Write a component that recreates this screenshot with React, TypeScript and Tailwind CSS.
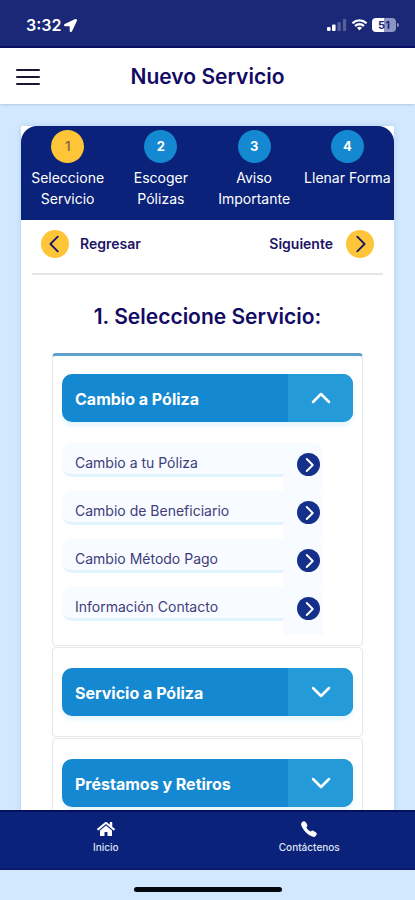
import React, { useState } from 'react';
import { FaHome, FaLocationArrow } from 'react-icons/fa';
import { IoCall } from 'react-icons/io5';

interface ServiceGroup {
  title: string;
  options: string[];
}

const steps = ['Seleccione Servicio', 'Escoger Pólizas', 'Aviso Importante', 'Llenar Forma'];

const groups: ServiceGroup[] = [
  {
    title: 'Cambio a Póliza',
    options: [
      'Cambio a tu Póliza',
      'Cambio de Beneficiario',
      'Cambio Método Pago',
      'Información Contacto',
    ],
  },
  { title: 'Servicio a Póliza', options: [] },
  { title: 'Préstamos y Retiros', options: [] },
];

interface ChevronProps {
  points: string;
  className: string;
}

function Chevron({ points, className }: ChevronProps) {
  return (
    <svg
      viewBox="0 0 24 24"
      fill="none"
      stroke="currentColor"
      strokeLinecap="round"
      strokeLinejoin="round"
      className={className}
      aria-hidden="true"
    >
      <polyline points={points} />
    </svg>
  );
}

const LEFT = '15,4 7,12 15,20';
const RIGHT = '9,4 17,12 9,20';
const UP = '4,16 12,8 20,16';
const DOWN = '4,8 12,16 20,8';

function StatusBar() {
  return (
    <div className="h-12 shrink-0 flex items-center justify-between pt-1 pl-[26px] pr-4 bg-[#1b2877] border-b-2 border-[#0c1169] text-white">
      <div className="flex items-center gap-[3px]">
        <span className="text-base font-semibold">3:32</span>
        <FaLocationArrow className="size-[13px]" />
      </div>
      <div className="flex items-center gap-1">
        <svg viewBox="0 0 20 12" className="w-5 h-3" fill="currentColor" aria-hidden="true">
          <rect x="0" y="8" width="3.6" height="4" rx="1" />
          <rect x="5" y="5.5" width="3.6" height="6.5" rx="1" />
          <rect x="10.4" y="3" width="3.4" height="9" rx="1" opacity=".25" />
          <rect x="15.8" y="0" width="3.4" height="12" rx="1" opacity=".25" />
        </svg>
        <svg viewBox="0 0 17 12" className="w-[17px] h-3" fill="currentColor" aria-hidden="true">
          <path d="M8.5 2.5c2.3 0 4.4.9 6 2.4.1.1.3.1.4 0l1.2-1.2c.1-.1.1-.3 0-.4a11 11 0 0 0-15.2 0c-.1.1-.1.3 0 .4l1.2 1.2c.1.1.3.1.4 0a8.7 8.7 0 0 1 6-2.4z" />
          <path d="M8.500 6.400c1.300 0 2.500.5 3.400 1.300.1.100.3.100.4 0l1.200-1.200c.1-.1.1-.3 0-.4a7.200 7.200 0 0 0-10 0c-.1.100-.1.300 0 .4l1.200 1.200c.1.100.3.100.4 0 .9-.8 2.100-1.300 3.400-1.300z" />
          <path d="M10.900 9.100c.1-.1.100-.300 0-.4a3.600 3.600 0 0 0-4.800 0c-.1.100-.1.300 0 .4l2.200 2.200c.1.100.3.100.4 0z" />
        </svg>
        <div className="flex items-center gap-px">
          <span className="w-6 h-3.5 flex items-center justify-center rounded-[4px] bg-linear-to-r from-white from-50% to-[#8f95c1] to-50% text-[#1b2877] text-[11px] leading-none font-bold">
            51
          </span>
          <span className="w-0.5 h-1 rounded-r-full bg-[#8f95c1]" />
        </div>
      </div>
    </div>
  );
}

function TopBar() {
  return (
    <header className="relative h-14 shrink-0 flex items-center justify-center bg-white pt-0.5 shadow-sm">
      <button
        type="button"
        aria-label="Menú"
        className="absolute left-4 flex flex-col gap-[5px] py-2"
      >
        <span className="w-6 h-0.5 rounded-full bg-[#15182f]" />
        <span className="w-6 h-0.5 rounded-full bg-[#15182f]" />
        <span className="w-6 h-0.5 rounded-full bg-[#15182f]" />
      </button>
      <h1 className="text-[21px] font-semibold text-[#120a63]">Nuevo Servicio</h1>
    </header>
  );
}

function Stepper() {
  return (
    <ol className="grid grid-cols-4 rounded-t-2xl bg-[#0a2279] pt-1 pb-[11px] text-white">
      {steps.map((step, index) => (
        <li key={step} className="flex flex-col items-center gap-1">
          <span
            className={
              index === 0
                ? 'size-[33px] flex items-center justify-center rounded-full bg-[#fec539] text-[13px] font-semibold text-[#8a6a4a]'
                : 'size-[33px] flex items-center justify-center rounded-full bg-[#1488d0] text-[13px] font-bold'
            }
          >
            {index + 1}
          </span>
          <span className="text-center text-sm leading-[21px]">{step}</span>
        </li>
      ))}
    </ol>
  );
}

function StepNav() {
  return (
    <div className="mx-[11px] flex justify-between border-b-2 border-[#e6e6e8] px-[9px] pt-2.5 pb-[15px] text-sm font-semibold text-[#1c1464]">
      <button type="button" className="flex items-center gap-[11px]">
        <span className="size-7 flex items-center justify-center rounded-full bg-[#fec539]">
          <Chevron points={LEFT} className="size-[22px] stroke-2" />
        </span>
        Regresar
      </button>
      <button type="button" className="flex items-center gap-[13px]">
        Siguiente
        <span className="size-7 flex items-center justify-center rounded-full bg-[#fec539]">
          <Chevron points={RIGHT} className="size-[22px] stroke-2" />
        </span>
      </button>
    </div>
  );
}

interface AccordionItemProps {
  group: ServiceGroup;
  open: boolean;
  first: boolean;
  onToggle: () => void;
}

function AccordionItem({ group, open, first, onToggle }: AccordionItemProps) {
  return (
    <li
      className={
        first
          ? 'rounded-[4px] border border-t-[3px] border-[#e6e7ea] border-t-[#5f9fcd] px-[9px] pt-[18px] pb-2.5'
          : 'mt-px rounded-[4px] border border-[#e6e7ea] px-[9px] py-5'
      }
    >
      <button
        type="button"
        aria-expanded={open}
        onClick={onToggle}
        className="w-full h-12 flex items-center overflow-hidden rounded-[10px] bg-[#1488d0] text-white shadow-[0_4px_4px_#e6f6fe]"
      >
        <span className="flex-1 pt-0.5 pl-[13px] text-left text-base font-bold">{group.title}</span>
        <span className="w-[65px] h-full flex items-center justify-center bg-[#259ad8]">
          <Chevron points={open ? UP : DOWN} className="size-6 stroke-[2.5]" />
        </span>
      </button>
      {open && group.options.length > 0 && (
        <ul className="mt-[21px] mr-[30px]">
          {group.options.map((option) => (
            <li key={option}>
              <button type="button" className="w-full flex items-start text-left">
                <span className="flex-1 h-[34px] flex items-center rounded-l-[10px] border-b-3 border-[#e2f4fd] bg-[#f8fbff] pt-2 pl-[13px] text-sm text-[#3f3d7c]">
                  {option}
                </span>
                <span className="w-10 h-12 rounded-tr-[10px] bg-[#f8fbff] pt-2.5 pl-3.5">
                  <span className="size-[23px] flex items-center justify-center rounded-full bg-[#14308a] text-white">
                    <Chevron points={RIGHT} className="size-[18px] stroke-[2.5]" />
                  </span>
                </span>
              </button>
            </li>
          ))}
        </ul>
      )}
    </li>
  );
}

function BottomNav() {
  return (
    <nav className="h-[60px] shrink-0 grid grid-cols-2 border-y-2 border-t-[#07105f] border-b-[#0a1a70] bg-[#0a2279] px-1 pt-2 text-[10px] leading-[14px] font-medium text-[#dfe3f5]">
      <a href="#inicio" className="flex flex-col items-center gap-0.5">
        <FaHome className="size-[18px] text-white" />
        Inicio
      </a>
      <a href="#contactenos" className="flex flex-col items-center gap-0.5">
        <IoCall className="size-[18px] text-white" />
        Contáctenos
      </a>
    </nav>
  );
}

export default function App() {
  const [openIndex, setOpenIndex] = useState(0);

  return (
    <div className="h-screen flex flex-col bg-[#d2e8ff] font-['Inter',sans-serif]">
      <StatusBar />
      <TopBar />
      <main className="flex-1 min-h-0 overflow-hidden px-[21px] pt-[22px]">
        <div className="bg-white shadow-[0_0_6px_rgba(90,130,180,0.25)]">
          <Stepper />
          <StepNav />
          <h2 className="mt-7 text-center text-[21px] leading-7 font-semibold text-[#120a63]">
            1. Seleccione Servicio:
          </h2>
          <ul className="mt-[22px] px-[31px] pb-8">
            {groups.map((group, index) => (
              <AccordionItem
                key={group.title}
                group={group}
                first={index === 0}
                open={openIndex === index}
                onToggle={() => setOpenIndex(openIndex === index ? -1 : index)}
              />
            ))}
          </ul>
        </div>
      </main>
      <BottomNav />
      <div className="h-[30px] shrink-0 flex justify-center pt-[17px]">
        <span className="w-[148px] h-[5px] rounded-full bg-[#05080c]" />
      </div>
    </div>
  );
}
